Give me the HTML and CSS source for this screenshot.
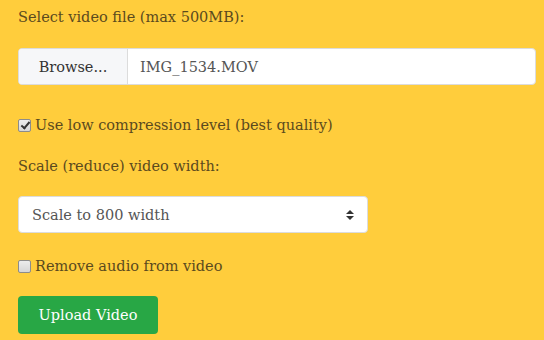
FILE: index.html
```html
<!DOCTYPE html>
<html>

<head>
    <link rel="stylesheet" href="styles.css">
</head>

<body>
    <form id="uploadForm">
        <div class="group">
            <label class="caption">Select video file (max 500MB):</label>
            <div class="file-box">
                <span class="browse">Browse...</span>
                <span class="file-name">IMG_1534.MOV</span>
            </div>
        </div>

        <div class="check-row">
            <input type="checkbox" id="lowCompression" checked>
            <label for="lowCompression">Use low compression level (best quality)</label>
        </div>

        <div class="group scale">
            <label class="caption">Scale (reduce) video width:</label>
            <div class="select-box">
                <span>Scale to 800 width</span>
                <svg class="arrows" width="8" height="12" viewBox="0 0 8 12">
                    <path d="M4 1 L8 5 L0 5 Z" fill="#333" />
                    <path d="M4 11 L8 7 L0 7 Z" fill="#333" />
                </svg>
            </div>
        </div>

        <div class="check-row">
            <input type="checkbox" id="removeAudio">
            <label for="removeAudio">Remove audio from video</label>
        </div>

        <button type="button" class="upload">Upload Video</button>
    </form>
</body>

</html>
```

FILE: styles.css
```css
html, body {
    margin: 0;
    padding: 0;
    background-color: #ffcd3c;
}

body {
    font-family: "DejaVu Serif", serif;
    font-size: 14.5px;
    color: #5b4a1e;
}

#uploadForm {
    padding: 5px 8px 0 18px;
    display: flex;
    flex-direction: column;
}

.caption {
    display: block;
    line-height: 24px;
}

.group {
    display: flex;
    flex-direction: column;
    gap: 19px;
}

.file-box {
    display: flex;
    width: 518px;
    height: 37px;
    box-sizing: border-box;
    border: 1px solid #dcdcdc;
    border-radius: 4px;
    background-color: #fff;
    overflow: hidden;
    margin-bottom: 28px;
}

.browse {
    width: 108px;
    background-color: #f6f7f9;
    border-right: 1px solid #dcdcdc;
    display: flex;
    align-items: center;
    justify-content: center;
    color: #333;
}

.file-name {
    padding-left: 12px;
    display: flex;
    align-items: center;
    color: #555;
}

.check-row {
    display: flex;
    align-items: center;
    gap: 4px;
    line-height: 24px;
}

.check-row input {
    appearance: none;
    margin: 0;
    width: 13px;
    height: 13px;
    box-sizing: border-box;
    border: 1px solid #8c8c8c;
    border-radius: 2px;
    background: linear-gradient(#ececec, #d6d6d6);
    position: relative;
}

.check-row input:checked::after {
    content: "";
    position: absolute;
    left: 3.5px;
    top: 0.5px;
    width: 3px;
    height: 7px;
    border: solid #333;
    border-width: 0 2px 2px 0;
    transform: rotate(40deg);
}

.scale {
    margin-top: 17px;
    gap: 18px;
}

.select-box {
    width: 350px;
    height: 37px;
    box-sizing: border-box;
    border: 1px solid #dcdcdc;
    border-radius: 4px;
    background-color: #fff;
    display: flex;
    align-items: center;
    justify-content: space-between;
    padding: 0 13px 0 13px;
    color: #555;
    margin-bottom: 21px;
}

.upload {
    align-self: flex-start;
    margin-top: 18px;
    width: 140px;
    height: 38px;
    border: none;
    border-radius: 4px;
    background-color: #28a745;
    color: #fff;
    font-family: "DejaVu Serif", serif;
    font-size: 14.5px;
}
```
